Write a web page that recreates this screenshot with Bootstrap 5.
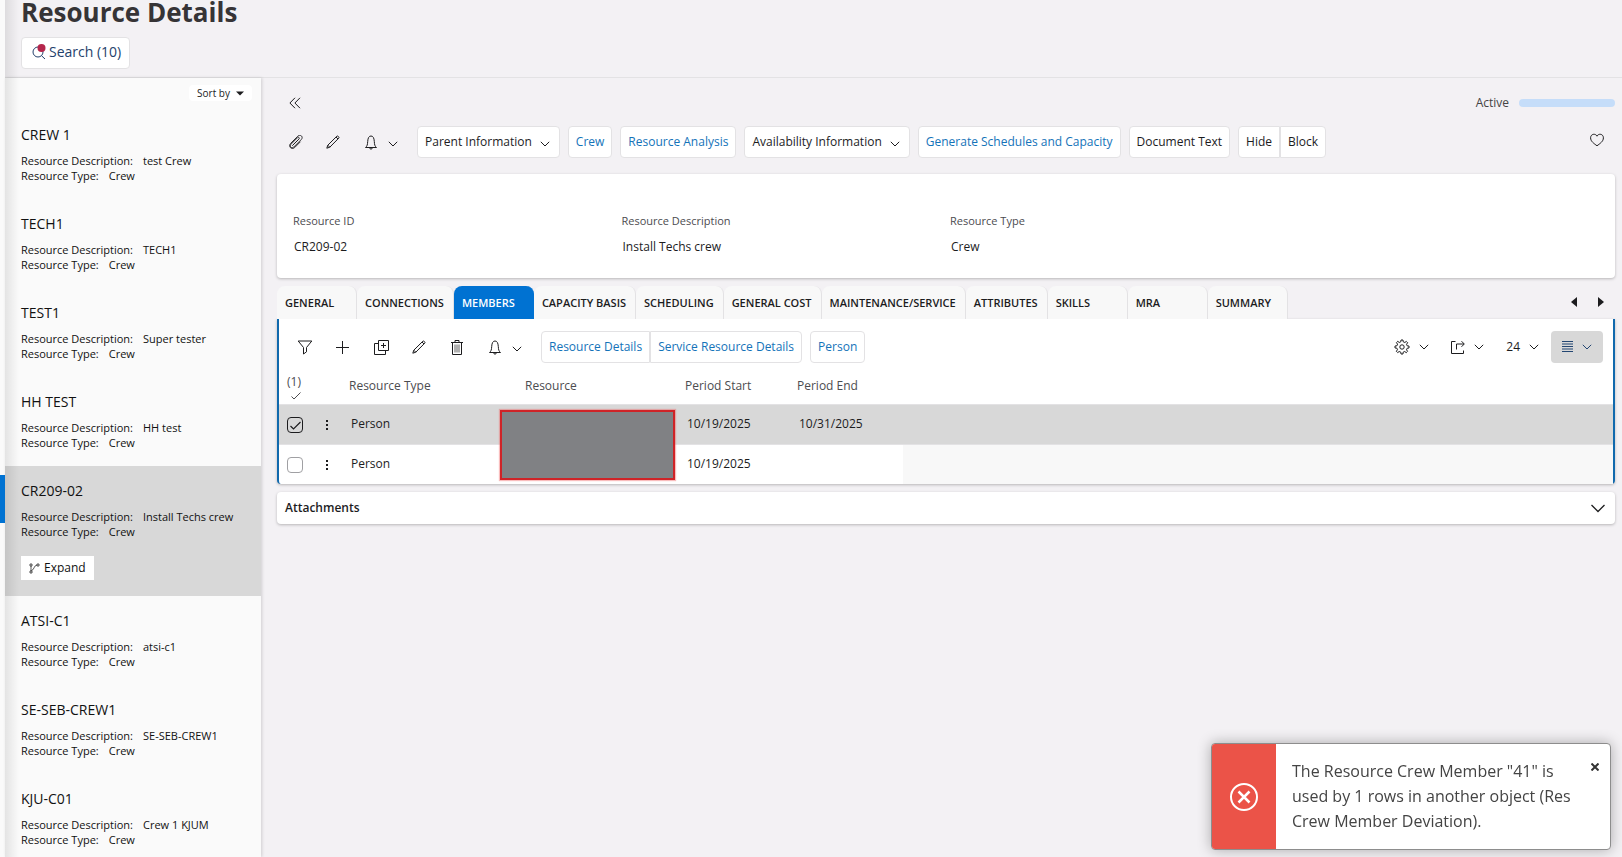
<!DOCTYPE html>
<html lang="en">
<head>
<meta charset="utf-8">
<meta name="viewport" content="width=device-width, initial-scale=1">
<title>Resource Details</title>
<link href="https://cdn.jsdelivr.net/npm/bootstrap@5.3.0/dist/css/bootstrap.min.css" rel="stylesheet">
<style>
:root{--app-blue:#0072d2;--link-blue:#1473b9;--ink:#1c1c1e;--line:#e3e2e4;--pick:#d8d8d8}
body{font-family:"Open Sans","Noto Sans",sans-serif;font-size:12px;line-height:20px;color:var(--ink);background:#f3f1f4}
svg{display:block;fill:none;stroke:currentColor;flex:none}
button{color:inherit}
/* Page frame */
.edge{width:5px;background:#fafafa}
.shell,.details{min-width:0}
.work-area{min-height:0}
.shell::before{content:"";position:absolute;inset:0 auto 0 0;width:14px;background:linear-gradient(90deg,rgba(0,0,0,.09),transparent);z-index:3;pointer-events:none}
.page-head{height:78px;padding:0 16px;border-bottom:1px solid var(--line)}
.page-head h1{font-size:26px;line-height:24px;font-weight:700;color:#363436;margin:0 0 13px}
.tool-btn{display:inline-flex;align-items:center;height:32px;padding:0 7px;background:#fff;border:1px solid var(--line);border-radius:4px;color:var(--ink);text-decoration:none;white-space:nowrap}
.tool-btn svg{margin:4px 2px 0 8px}
a.tool-btn{color:var(--link-blue)}
.search-btn{font-size:14px;color:#24416b;padding:0 8px 2px 10px}
.search-btn svg{margin:0 3px 0 0}
.tool-btn.first{border-radius:4px 0 0 4px}
.tool-btn.last{border-radius:0 4px 4px 0}
/* Resource list */
.res-list{width:256px;background:#fafafa;box-shadow:1px 0 3px rgba(0,0,0,.15)}
.sort-btn{font-size:10px;line-height:16px;border:0;background:#fff;border-radius:4px;padding:0 8px;gap:6px;margin:7px 9px 9px auto}
.res-item{position:relative;padding:15px 16px 16px;font-size:11px;line-height:15px;color:#111}
.res-item h2{font-size:14px;line-height:20px;font-weight:400;margin:0 0 8px}
.res-item dt{font-weight:400;margin-right:10px}
.res-item dd{margin:0}
.res-item.picked{background:var(--pick)}
.res-item.picked::before{content:"";position:absolute;left:-5px;top:9px;width:5px;height:48px;background:var(--app-blue)}
.expand-btn{display:flex;align-items:center;gap:4px;height:24px;border:0;background:#fff;font-size:12px;line-height:16px;padding:0 8px;margin-top:17px}
/* Details */
.details{padding:15px 7px 0 16px}
.icon-btn{display:inline-flex;align-items:center;justify-content:center;height:32px;border:0;padding:0;background:none}
.state-row{gap:10px;height:20px;margin-bottom:13px}
.meter-bar{width:96px;height:8px;border-radius:4px;background:#c5ddf9}
.panel-box{background:#fff;border-radius:4px;box-shadow:0 1px 3px rgba(0,0,0,.25)}
.head-card{padding:37px 12px 21px}
.head-card dt{font-size:11px;font-weight:400;line-height:20px;color:#4c4c50;margin-bottom:6px}
.head-card dd{line-height:20px;margin:0 0 0 1px}
.head-card .col-3{padding:0 4px}
.tab-row{margin-top:8px}
.tab-btn{height:33px;min-width:80px;padding:0 9px 0 8px;text-align:left;border:0;border-right:1px solid var(--line);background:#f8f8f8;border-radius:8px 8px 0 0;font-size:11px;font-weight:600;white-space:nowrap}
.tab-btn.active{background:var(--app-blue);color:#fff;border-color:var(--app-blue)}
.members{border-left:2px solid #1169ad;border-right:2px solid #1169ad;border-radius:0 0 4px 4px}
.list-tools{padding:12px 10px 0 11px}
.view-btn{gap:9px;width:52px;height:32px;border:0;border-radius:4px;background:var(--pick);color:#234672}
.view-set{gap:22px}
.view-set .icon-btn{gap:9px}
.grid-tbl{width:100%;table-layout:fixed;border-collapse:collapse}
.grid-tbl th{font-weight:400;color:#4c4c50;height:41px;padding:6px 8px 0;vertical-align:middle}
.grid-tbl td{height:40px;padding:0 10px;border-top:1px solid var(--line)}
.grid-tbl tr.picked td{background:var(--pick)}
.grid-tbl td.filler{background:#f8f8f8}
.grid-tbl th.tick-col,.grid-tbl td.tick-col{padding:1px 0 0 8px}
.grid-tbl th.tick-col{padding-top:5px}
.grid-tbl .tick-col small{display:block;font-size:12px;line-height:20px}
.row-tick{appearance:none;display:block;width:16px;height:16px;margin:0;border:1px solid #a0a0a3;border-radius:4px;background:#fff}
.row-tick:checked{border-color:#1c1c1e;background:transparent url("data:image/svg+xml,%3Csvg xmlns='http://www.w3.org/2000/svg' viewBox='0 0 14 14'%3E%3Cpath d='M2.5 8l3 3 7-7' fill='none' stroke='%231c1c1e' stroke-width='1.2'/%3E%3C/svg%3E")}
.masked{position:absolute;left:-17px;top:5px;width:175px;height:70px;background:#808184;border:2px solid #cf2327;box-shadow:0 0 1px 1px rgba(240,90,90,.4);z-index:1}
.attach{height:32px;margin-top:8px;padding:0 10px 0 8px;font-weight:600;border:0}
/* Message */
.alert-box{right:11px;bottom:7px;width:400px;border:1px solid #8d8d8d;border-radius:4px;background:#fff;box-shadow:0 0 14px rgba(0,0,0,.3);color:#444}
.alert-side{width:64px;background:#eb5348;color:#fff}
.alert-box p{font-size:16px;line-height:25px;margin:0;padding:15px 0}
.close-btn{border:0;background:none;padding:0;margin:15px 11px 0 0;height:16px;color:#333}
</style>
</head>
<body>
<svg class="d-none" aria-hidden="true">
  <symbol id="i-down" viewBox="0 0 10 10"><path d="M.8 2.800 5 7l4.200-4.200"/></symbol>
  <symbol id="i-pencil" viewBox="0 0 14 14"><path d="M.800 13.200l1-3L10.900 1.200c.8-.8 2.700 1.100 1.900 1.900L3.800 12.200zM10 2l2 2M1.800 10.200l2 2"/></symbol>
  <symbol id="i-bell" viewBox="0 0 14 15"><path d="M1.500 12.500c1.700-1.500 2-2.600 2.200-6C3.900 3 4.900 1 7 1s3.100 2 3.300 5.500c.2 3.400.5 4.500 2.200 6zM5.600 12.700c0 1.900 2.800 1.900 2.800 0"/></symbol>
</svg>
<div class="d-flex vh-100 overflow-hidden">
  <div class="edge flex-shrink-0"></div>
  <div class="shell position-relative flex-grow-1 d-flex flex-column">
    <header class="page-head flex-shrink-0">
      <h1>Resource Details</h1>
      <button class="tool-btn search-btn" type="button">
        <svg width="14" height="16" viewBox="0 0 14 16"><circle cx="6" cy="8" r="5"/><path d="M9.500 11.700l3.500 3.300"/><circle cx="9.500" cy="4" r="4" fill="#b5264c" stroke="none"/></svg>Search (10)
      </button>
    </header>
    <div class="work-area d-flex flex-grow-1">
      <aside class="res-list flex-shrink-0">
        <button class="sort-btn d-flex align-items-center" type="button">Sort by <svg width="8" height="5" viewBox="0 0 8 5"><path d="M0 .500h8L4 4.500z" fill="currentColor" stroke="none"/></svg></button>
        <article class="res-item"><h2>CREW 1</h2><dl class="m-0"><div class="d-flex"><dt>Resource Description:</dt><dd>test Crew</dd></div><div class="d-flex"><dt>Resource Type:</dt><dd>Crew</dd></div></dl></article>
        <article class="res-item"><h2>TECH1</h2><dl class="m-0"><div class="d-flex"><dt>Resource Description:</dt><dd>TECH1</dd></div><div class="d-flex"><dt>Resource Type:</dt><dd>Crew</dd></div></dl></article>
        <article class="res-item"><h2>TEST1</h2><dl class="m-0"><div class="d-flex"><dt>Resource Description:</dt><dd>Super tester</dd></div><div class="d-flex"><dt>Resource Type:</dt><dd>Crew</dd></div></dl></article>
        <article class="res-item"><h2>HH TEST</h2><dl class="m-0"><div class="d-flex"><dt>Resource Description:</dt><dd>HH test</dd></div><div class="d-flex"><dt>Resource Type:</dt><dd>Crew</dd></div></dl></article>
        <article class="res-item picked"><h2>CR209-02</h2><dl class="m-0"><div class="d-flex"><dt>Resource Description:</dt><dd>Install Techs crew</dd></div><div class="d-flex"><dt>Resource Type:</dt><dd>Crew</dd></div></dl>
          <button class="expand-btn" type="button"><svg width="11" height="11" viewBox="0 0 11 11" stroke-width=".7"><path d="M1 1h2v2H1zM1 8h2v2H1zM2 3v5M8 1h2v2H8zM2.500 7.500C5 7.500 5 2 8 2"/></svg>Expand</button></article>
        <article class="res-item"><h2>ATSI-C1</h2><dl class="m-0"><div class="d-flex"><dt>Resource Description:</dt><dd>atsi-c1</dd></div><div class="d-flex"><dt>Resource Type:</dt><dd>Crew</dd></div></dl></article>
        <article class="res-item"><h2>SE-SEB-CREW1</h2><dl class="m-0"><div class="d-flex"><dt>Resource Description:</dt><dd>SE-SEB-CREW1</dd></div><div class="d-flex"><dt>Resource Type:</dt><dd>Crew</dd></div></dl></article>
        <article class="res-item"><h2>KJU-C01</h2><dl class="m-0"><div class="d-flex"><dt>Resource Description:</dt><dd>Crew 1 KJUM</dd></div><div class="d-flex"><dt>Resource Type:</dt><dd>Crew</dd></div></dl></article>
      </aside>
      <main class="details flex-grow-1">
        <div class="state-row d-flex align-items-center">
          <button class="icon-btn ms-2" type="button" aria-label="Collapse list" style="width:20px"><svg width="12" height="12" viewBox="0 0 12 12"><path d="M6 .800.900 6 6 11.200M11 .800 5.900 6l5.100 5.200"/></svg></button>
          <span class="ms-auto" style="color:#444">Active</span>
          <div class="meter-bar"></div>
        </div>
        <div class="d-flex align-items-center gap-2">
          <div class="d-flex" style="width:132px">
            <button class="icon-btn" type="button" aria-label="Attach" style="width:38px"><svg width="14" height="14" viewBox="0 0 14 14" stroke-width=".9"><path d="M4.200 9.800 10 4c1-1-.4-2.400-1.400-1.400L2 9.200c-2 2 .8 4.800 2.800 2.800l7.400-7.400c2.600-2.600-.8-6-3.400-3.400L1.500 8.500C.4 9.800.4 11.500 1.400 12.600s2.900 1.200 4.200 0L11.500 6.700M3.200 10.800 9.300 4.700"/></svg></button>
            <button class="icon-btn" type="button" aria-label="Edit" style="width:36px"><svg width="14" height="14"><use href="#i-pencil"/></svg></button>
            <button class="icon-btn justify-content-end" type="button" aria-label="Notifications" style="width:47px;gap:10px"><svg width="14" height="15"><use href="#i-bell"/></svg><svg class="mt-1" width="10" height="10"><use href="#i-down"/></svg></button>
          </div>
          <button class="tool-btn" type="button">Parent Information<svg width="10" height="10"><use href="#i-down"/></svg></button>
          <a class="tool-btn" href="#">Crew</a>
          <a class="tool-btn" href="#">Resource Analysis</a>
          <button class="tool-btn" type="button">Availability Information<svg width="10" height="10"><use href="#i-down"/></svg></button>
          <a class="tool-btn" href="#">Generate Schedules and Capacity</a>
          <button class="tool-btn" type="button">Document Text</button>
          <div class="d-flex"><button class="tool-btn first" type="button">Hide</button><button class="tool-btn last" type="button">Block</button></div>
          <button class="icon-btn ms-auto pb-1" type="button" aria-label="Favourite" style="margin-right:11px"><svg width="14" height="14" viewBox="0 0 14 14"><path d="M7 12.800C4 10.500.600 8.500.600 4.800c0-4 5-4.700 6.400-1.600C8.400.1 13.400.8 13.400 4.800c0 3.700-3.400 5.700-6.400 8z"/></svg></button>
        </div>
        <section class="panel-box head-card mt-3">
          <dl class="row m-0">
            <div class="col-3"><dt>Resource ID</dt><dd>CR209-02</dd></div>
            <div class="col-3"><dt>Resource Description</dt><dd>Install Techs crew</dd></div>
            <div class="col-3"><dt>Resource Type</dt><dd>Crew</dd></div>
          </dl>
        </section>
        <div class="tab-row d-flex">
          <div class="d-flex" role="tablist">
            <button class="tab-btn" role="tab" type="button">GENERAL</button>
            <button class="tab-btn" role="tab" type="button">CONNECTIONS</button>
            <button class="tab-btn active" role="tab" type="button">MEMBERS</button>
            <button class="tab-btn" role="tab" type="button">CAPACITY BASIS</button>
            <button class="tab-btn" role="tab" type="button">SCHEDULING</button>
            <button class="tab-btn" role="tab" type="button">GENERAL COST</button>
            <button class="tab-btn" role="tab" type="button">MAINTENANCE/SERVICE</button>
            <button class="tab-btn" role="tab" type="button">ATTRIBUTES</button>
            <button class="tab-btn" role="tab" type="button">SKILLS</button>
            <button class="tab-btn" role="tab" type="button">MRA</button>
            <button class="tab-btn" role="tab" type="button">SUMMARY</button>
          </div>
          <div class="ms-auto d-flex" style="gap:21px;margin-right:11px">
            <button class="icon-btn" type="button" aria-label="Previous tabs"><svg width="6" height="10" viewBox="0 0 6 10"><path d="M6 0v10L0 5z" fill="currentColor" stroke="none"/></svg></button>
            <button class="icon-btn" type="button" aria-label="Next tabs"><svg width="6" height="10" viewBox="0 0 6 10"><path d="M0 0v10l6-5z" fill="currentColor" stroke="none"/></svg></button>
          </div>
        </div>
        <section class="panel-box members">
          <div class="list-tools d-flex align-items-center gap-2">
            <div class="d-flex" style="width:243px">
              <button class="icon-btn" type="button" aria-label="Filter" style="width:29px"><svg width="16" height="15" viewBox="0 0 16 15"><path d="M1.200 1h13.600L9.500 7.500v4.300L6.500 14V7.500z"/></svg></button>
              <button class="icon-btn" type="button" aria-label="Add" style="width:46px"><svg width="13" height="13" viewBox="0 0 13 13"><path d="M6.500 0v13M0 6.500h13"/></svg></button>
              <button class="icon-btn" type="button" aria-label="Duplicate" style="width:32px"><svg width="15" height="15" viewBox="0 0 15 15"><path d="M4.500.500h10v10h-10zM4.500 3.500h-4v11h11v-4M9.500 3v5M7 5.500h5"/></svg></button>
              <button class="icon-btn" type="button" aria-label="Edit row" style="width:44px"><svg width="14" height="14"><use href="#i-pencil"/></svg></button>
              <button class="icon-btn" type="button" aria-label="Delete" style="width:32px"><svg width="12" height="15" viewBox="0 0 12 15"><path d="M0 2.500h12M4 2.500v-2h4v2M1.500 2.500v12h9v-12"/><path d="M4 4.500v8M6 4.500v8M8 4.500v8" stroke-width=".7"/></svg></button>
              <button class="icon-btn justify-content-end" type="button" aria-label="Row notifications" style="width:49px;gap:10px"><svg width="14" height="15"><use href="#i-bell"/></svg><svg class="mt-1" width="10" height="10"><use href="#i-down"/></svg></button>
            </div>
            <div class="d-flex"><a class="tool-btn first" href="#">Resource Details</a><a class="tool-btn last" href="#">Service Resource Details</a></div>
            <a class="tool-btn" href="#">Person</a>
            <div class="ms-auto d-flex align-items-center">
              <div class="view-set d-flex align-items-center me-1 pe-2">
                <button class="icon-btn" type="button" aria-label="Settings"><svg width="16" height="16" viewBox="0 0 16 16"><circle cx="8" cy="8" r="2.200"/><path d="M6.800 2.800 7 1h2l.2 1.800 1.700.7 1.400-1.100 1.400 1.400-1.200 1.400.7 1.700L15 7v2l-1.800.2-.7 1.700 1.100 1.400-1.400 1.400-1.400-1.200-1.700.7L9 15H7l-.2-1.800-1.700-.7-1.400 1.100-1.400-1.400 1.200-1.400-.7-1.700L1 9V7l1.900-.2.700-1.700-1.200-1.400 1.400-1.400 1.400 1.200z"/></svg><svg width="10" height="10"><use href="#i-down"/></svg></button>
                <button class="icon-btn" type="button" aria-label="Export"><svg width="14" height="14" viewBox="0 0 14 14"><path d="M4.500 1.500h-4v12h12v-3M5.500 9.500V4H13M10.500 1.200 13.300 4l-2.800 2.800"/></svg><svg width="10" height="10"><use href="#i-down"/></svg></button>
                <button class="icon-btn" type="button">24<svg width="10" height="10"><use href="#i-down"/></svg></button>
              </div>
              <button class="view-btn d-flex align-items-center justify-content-center" type="button" aria-label="View"><svg width="11" height="12" viewBox="0 0 11 12"><path d="M0 .500h11M0 3h11M0 5.500h11M0 8h11M0 10.500h11"/></svg><svg width="10" height="10"><use href="#i-down"/></svg></button>
            </div>
          </div>
          <table class="grid-tbl">
            <colgroup><col style="width:62px"><col style="width:176px"><col style="width:160px"><col style="width:112px"><col style="width:114px"><col></colgroup>
            <thead><tr>
              <th class="tick-col"><small>(1)</small><svg class="ms-1" width="10" height="8" viewBox="0 0 10 8"><path d="M.500 4.500 3 7l6.500-6.500"/></svg></th>
              <th>Resource Type</th><th>Resource</th><th>Period Start</th><th>Period End</th><th></th>
            </tr></thead>
            <tbody>
              <tr class="picked"><td class="tick-col"><div class="d-flex align-items-center"><input class="row-tick" type="checkbox" checked aria-label="Select row 1"><button class="icon-btn ms-3" type="button" aria-label="Row 1 menu" style="width:16px"><svg width="2" height="10" viewBox="0 0 2 10"><path d="M1 0v2M1 4v2M1 8v2" stroke-width="2"/></svg></button></div></td>
                <td>Person</td><td class="position-relative"><div class="masked"></div></td><td>10/19/2025</td><td>10/31/2025</td><td></td></tr>
              <tr><td class="tick-col"><div class="d-flex align-items-center"><input class="row-tick" type="checkbox" aria-label="Select row 2"><button class="icon-btn ms-3" type="button" aria-label="Row 2 menu" style="width:16px"><svg width="2" height="10" viewBox="0 0 2 10"><path d="M1 0v2M1 4v2M1 8v2" stroke-width="2"/></svg></button></div></td>
                <td>Person</td><td></td><td>10/19/2025</td><td></td><td class="filler"></td></tr>
            </tbody>
          </table>
        </section>
        <button class="panel-box attach w-100 d-flex align-items-center justify-content-between" type="button">Attachments<svg width="14" height="14" viewBox="0 0 14 14" stroke-width="1.300"><path d="M.500 4 7 10.500 13.500 4"/></svg></button>
      </main>
    </div>
  </div>
</div>
<div class="alert-box position-fixed d-flex overflow-hidden" role="alert">
  <div class="alert-side d-flex align-items-center justify-content-center flex-shrink-0"><svg width="30" height="30" viewBox="0 0 30 30" stroke-width="2"><circle cx="15" cy="15" r="13"/><path d="M9.500 9.500l11 11M20.500 9.500l-11 11" stroke-width="2.500"/></svg></div>
  <p class="ps-3 flex-grow-1">The Resource Crew Member "41" is used by 1 rows in another object (Res Crew Member Deviation).</p>
  <button class="close-btn" type="button" aria-label="Close"><svg width="8" height="8" viewBox="0 0 8 8" stroke-width="2"><path d="M.500.500l7 7M7.500.500l-7 7"/></svg></button>
</div>
<script src="https://cdn.jsdelivr.net/npm/bootstrap@5.3.0/dist/js/bootstrap.bundle.min.js"></script>
</body>
</html>
